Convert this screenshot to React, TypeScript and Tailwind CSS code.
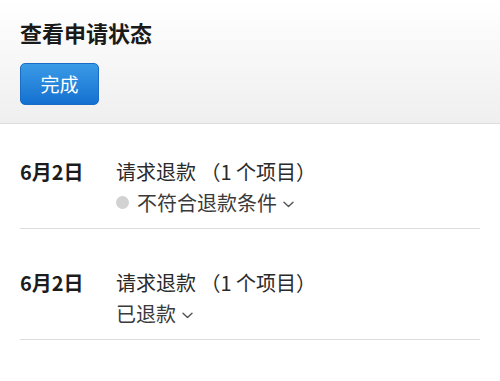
const font = { fontFamily: '"Noto Sans CJK SC", "Noto Sans", sans-serif' }

function Chevron() {
  return (
    <svg width="11" height="7" viewBox="0 0 11 7" className="ml-[6px] mt-[3px]" fill="none">
      <path d="M1 1.2l4.5 4.3L10 1.2" stroke="#555" strokeWidth="1.4" strokeLinecap="round" strokeLinejoin="round" />
    </svg>
  )
}

function Row({ date, status, dot, first }: { date: string; status: string; dot?: boolean; first?: boolean }) {
  return (
    <div className={`mx-[20px] flex border-b border-[#dcdcdc] pb-[10px] ${first ? 'pt-[32px]' : 'pt-[38px]'}`}>
      <div className="w-[96px] shrink-0 text-[20px] font-bold leading-[31px] text-[#1c1c1c]">{date}</div>
      <div className="flex flex-col">
        <div className="text-[20px] leading-[31px] text-[#2a2a2a]">请求退款 （1 个项目）</div>
        <div className="flex items-center text-[20px] leading-[31px] text-[#3a3a3a]">
          {dot && <span className="mr-[8px] inline-block h-[13px] w-[13px] rounded-full bg-[#d2d2d2]" />}
          <span>{status}</span>
          <Chevron />
        </div>
      </div>
    </div>
  )
}

export default function App() {
  return (
    <div className="h-[381px] w-[500px] overflow-hidden bg-white" style={font}>
      <div className="h-[124px] border-b border-[#dedede] bg-gradient-to-b from-[#ffffff] to-[#efefef] px-[20px] pt-[17px]">
        <div className="text-[22px] font-bold leading-[30px] text-[#1a1a1a]">查看申请状态</div>
        <button className="mt-[16px] h-[42px] w-[79px] rounded-[5px] border border-[#1a6cc4] bg-gradient-to-b from-[#3a9be6] to-[#1470d0] text-[19px] text-white">
          完成
        </button>
      </div>
      <Row date="6月2日" status="不符合退款条件" dot first />
      <Row date="6月2日" status="已退款" />
    </div>
  )
}
